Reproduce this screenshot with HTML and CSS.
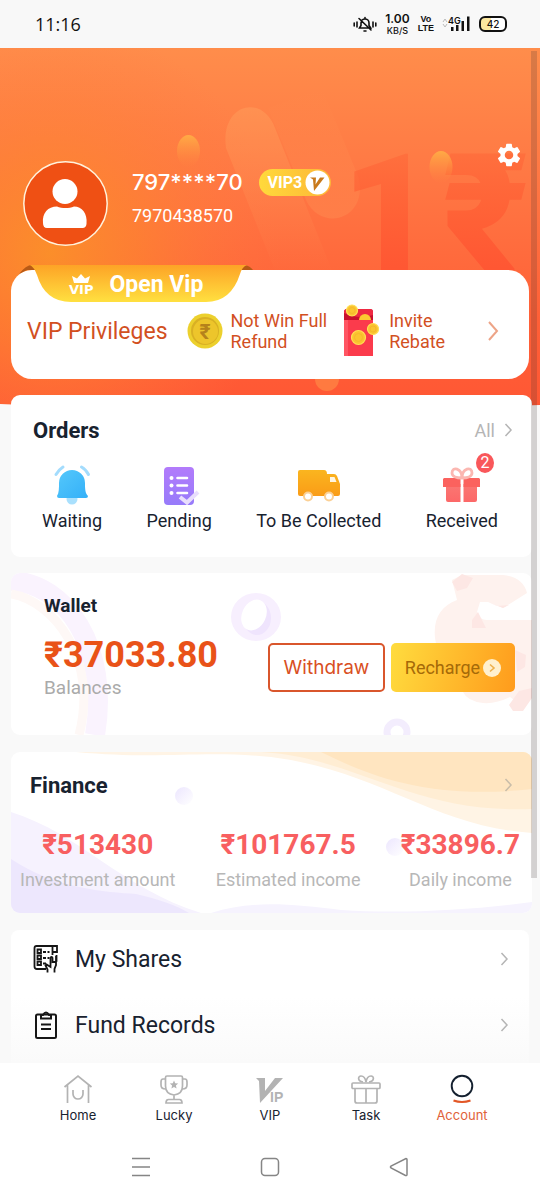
FILE: index.html
```html
<!DOCTYPE html>
<html lang="en">
<head>
<meta charset="utf-8">
<meta name="viewport" content="width=device-width, initial-scale=1">
<title>Account</title>
<link rel="stylesheet" href="styles.css">
</head>
<body>
<div class="app">
  <header class="status">
    <span class="status-time">11:16</span>
    <div class="status-right">
      <svg width="24" height="18" viewBox="0 0 24 18" fill="none" stroke="#111" stroke-width="1.6" stroke-linecap="round"><path d="M1.200 8v3M4 7v5M20 7v5M22.800 8v3"/><path d="M6.500 13h11.200l-1.700-2.500V8a4 4 0 0 0-8 0v2.500L6.500 13zM11 16h2M12 2.500v1M6 3.500l12 11.500"/></svg>
      <span class="speed"><b>1.00</b><span>KB/S</span></span>
      <span class="volte"><span>Vo</span><span>LTE</span></span>
      <svg width="29" height="18" viewBox="0 0 29 18"><path d="M1 7l2-3 2 3M1 9l2 3 2-3" fill="none" stroke="#bbb"/><text x="6" y="9" class="net">4G</text><path d="M9 12h2.500v4H9zM14 10h2.500v6H14zM19.500 6H22v10h-2.500zM25 1.500h2.500V16H25z" fill="#111"/></svg>
      <span class="battery">42</span>
    </div>
  </header>

  <div class="viewport">
  <main class="scroll">
    <svg class="hero-bg" viewBox="0 0 540 362" preserveAspectRatio="xMidYMin slice" aria-hidden="true">
      <defs>
        <linearGradient id="h1" x2="0" y2="1"><stop offset="0" stop-color="#ff8d4b"/><stop offset=".35" stop-color="#ff7844"/><stop offset=".75" stop-color="#ff6037"/><stop offset="1" stop-color="#ff5734"/></linearGradient>
        <radialGradient id="h2" gradientUnits="userSpaceOnUse" cx="50" cy="205" r="230"><stop offset="0" stop-color="#fb9029" stop-opacity=".95"/><stop offset=".4" stop-color="#fd862f" stop-opacity=".65"/><stop offset="1" stop-color="#ff7840" stop-opacity="0"/></radialGradient>
        <linearGradient id="h3" x2="0" y2="1"><stop offset="0" stop-color="#ffab45"/><stop offset="1" stop-color="#ff8a40" stop-opacity="0"/></linearGradient>
        <linearGradient id="h4" gradientUnits="userSpaceOnUse" x1="0" y1="60" x2="0" y2="230"><stop offset="0" stop-color="#ff9a58" stop-opacity=".6"/><stop offset="1" stop-color="#ff8950" stop-opacity="0"/></linearGradient>
        <linearGradient id="h5" gradientUnits="userSpaceOnUse" x1="0" y1="40" x2="0" y2="185"><stop offset="0" stop-color="#ff9050" stop-opacity="0"/><stop offset="1" stop-color="#ff8a50" stop-opacity=".55"/></linearGradient>
        <linearGradient id="h6" gradientUnits="userSpaceOnUse" x1="0" y1="100" x2="0" y2="220"><stop offset="0" stop-color="#ff6335" stop-opacity=".45"/><stop offset=".5" stop-color="#ff5e34" stop-opacity=".75"/><stop offset="1" stop-color="#ff5733"/></linearGradient>
      </defs>
      <path d="M0 0h540v357q-270 9-540-1z" fill="url(#h1)"/>
      <path d="M0 0h540v357q-270 9-540-1z" fill="url(#h2)"/>
      <path d="M226 100C220 56 262 45 275 80l60 150h-57z" fill="url(#h4)"/>
      <path d="M322 40l36 88c12 42-36 58-52 24L268 60z" fill="url(#h5)"/>
      <text x="341" y="222" class="hero-mark" fill="url(#h6)">1</text>
      <text x="442" y="222" class="hero-mark" fill="url(#h6)">₹</text>
      <ellipse cx="188.500" cy="103" rx="11.500" ry="16" fill="url(#h3)"/>
      <ellipse cx="441" cy="119" rx="11.500" ry="16" fill="url(#h3)"/>
      <ellipse cx="327" cy="331" rx="12" ry="12" fill="#ff7a40"/>
    </svg>

    <section class="profile">
      <svg class="avatar" viewBox="0 0 85 85" role="img" aria-label="Profile photo"><circle cx="42.500" cy="42.500" r="41.700" fill="#ef5014" stroke="#fff2dc" stroke-width="1.500"/><circle cx="42" cy="30.500" r="12.500" fill="#fff"/><path d="M20 62C19 52 25 45.500 34 45.500c5 2 12 2 17 0C59 45.500 64.500 52 63.500 63q-.5 4-4 4H24q-4 0-4-5z" fill="#fff"/></svg>
      <div class="who">
        <div class="who-line"><h1 class="who-name">797****70</h1>
          <span class="level">VIP3<svg width="25" height="25" viewBox="0 0 25 25" aria-hidden="true"><circle cx="12.500" cy="12.500" r="12" fill="#fff"/><path d="M5 7.500h6l-.5 7 4.500-7h4.500L9 21 8 9.500z" fill="#c97a1c"/></svg></span>
        </div>
        <p class="who-phone">7970438570</p>
      </div>
      <button class="gear" type="button" aria-label="Settings"><svg width="26" height="26" viewBox="1 1 22 22"><path fill="#fff" d="M19.140 12.940c.04-.3.060-.61.060-.94s-.02-.64-.07-.94l2.030-1.580a.49.490 0 0 0 .12-.61l-1.920-3.320a.49.490 0 0 0-.59-.22l-2.390.96a7 7 0 0 0-1.620-.94l-.36-2.540a.48.480 0 0 0-.48-.41h-3.840a.48.480 0 0 0-.47.410l-.36 2.540a7.400 7.400 0 0 0-1.620.94l-2.390-.96a.49.490 0 0 0-.59.220L2.740 8.870a.48.480 0 0 0 .12.610l2.030 1.580a6 6 0 0 0-.02 1.880l-2.030 1.580a.49.490 0 0 0-.12.610l1.920 3.320c.12.220.37.290.59.220l2.390-.96c.5.380 1.030.7 1.620.94l.36 2.540c.05.240.24.410.48.410h3.840c.24 0 .44-.17.470-.41l.36-2.540a7 7 0 0 0 1.620-.94l2.390.96c.22.080.47 0 .59-.22l1.920-3.320a.49.490 0 0 0-.12-.61zM12 15.600a3.600 3.600 0 1 1 0-7.200 3.600 3.600 0 0 1 0 7.200z"/></svg></button>
    </section>

    <section class="vip">
      <div class="ribbon">
        <svg class="ribbon-bg" viewBox="0 0 234 38" preserveAspectRatio="none" aria-hidden="true"><defs><linearGradient id="r1" x2="0" y2="1"><stop offset="0" stop-color="#fda326"/><stop offset="1" stop-color="#ffe040"/></linearGradient></defs><path d="M0 9Q7 0 13 0l10 5H8zM226 0q5 1 8 5h-14z" fill="#b85a16"/><path d="M11 0h217q-5 2-7 9-9 28-34 28H52Q26 37 18 10 15 2 11 0z" fill="url(#r1)"/></svg>
        <span class="crown"><svg width="20" height="9" viewBox="0 0 20 9" aria-hidden="true"><path d="M1 2l5 2.500L10 0l4 4.500L19 2l-2 7H3z" fill="#fff"/></svg><span>VIP</span></span>
        <span class="ribbon-title">Open Vip</span>
      </div>
      <h2 class="vip-title">VIP Privileges</h2>
      <div class="perk">
        <svg width="36" height="36" viewBox="0 0 36 36" aria-hidden="true"><circle cx="18" cy="18" r="17.500" fill="#ecd02d"/><circle cx="18" cy="18" r="14" fill="#d9b024"/><circle cx="18.500" cy="18.500" r="12.500" fill="#edc52b"/><text x="18" y="26" text-anchor="middle" class="coin-mark">₹</text></svg>
        <span>Not Win Full<br>Refund</span>
      </div>
      <div class="perk invite">
        <svg width="37" height="54" viewBox="0 0 37 54" aria-hidden="true"><path d="M2 8q0-3 3-3h23q3 0 3 3v9H2z" fill="#c8102c"/><path d="M6 5h22q3 0 3 3v3q-14 5-29-2V8q0-3 4-3z" fill="#ef2942"/><path d="M2 16h29v36H2z" fill="#fb3b4c"/><path d="M2 16h4v36H2z" fill="#ff5563"/><path d="M17 16a6 6 0 0 1 12 0z" fill="#fcc931"/><g fill="#fbc42f" stroke="#ffdf54" stroke-width="1.200"><circle cx="10" cy="6.500" r="5.500"/><circle cx="31" cy="25" r="5.500"/><circle cx="16.500" cy="33.500" r="7"/></g><g fill="none" stroke="#f3b52c" stroke-width=".8"><circle cx="10" cy="6.500" r="3"/><circle cx="31" cy="25" r="3"/><circle cx="16.500" cy="33.500" r="4"/></g></svg>
        <span>Invite<br>Rebate</span>
      </div>
      <svg class="vip-go" width="12" height="20" viewBox="0 0 12 20" aria-hidden="true"><path d="M2 1l8 9-8 9" fill="none" stroke="#eda487" stroke-width="2"/></svg>
    </section>

    <section class="card orders">
      <div class="orders-head"><h2>Orders</h2><a class="all" href="#orders">All <svg width="9" height="14" viewBox="0 0 9 14" aria-hidden="true"><path d="M1.500 1L7 7l-5.500 6" fill="none" stroke="#b5b5b5" stroke-width="1.500"/></svg></a></div>
      <div class="order-items">
        <a class="order" href="#waiting"><svg width="44" height="42" viewBox="0 0 44 42" aria-hidden="true"><defs><linearGradient id="b1" x2="1" y2="1"><stop offset="0" stop-color="#55c8fb"/><stop offset="1" stop-color="#34b0f8"/></linearGradient></defs><circle cx="22" cy="35" r="5.500" fill="#a9e0fd"/><path d="M7 32c2-3 2-8 2-13a13 13 0 0 1 26 0c0 5 0 10 3 13q0 2-2 2H9Q7 34 7 32z" fill="url(#b1)"/><path d="M6 10.500q3-5 7-7.500M38.500 10.500Q36 5.500 31.500 3" fill="none" stroke="#a3dcfd" stroke-width="3" stroke-linecap="round"/></svg><span>Waiting</span></a>
        <a class="order" href="#pending"><svg width="44" height="42" viewBox="0 0 44 42" aria-hidden="true"><defs><linearGradient id="p1" x2="0" y2="1"><stop offset="0" stop-color="#b27bfb"/><stop offset="1" stop-color="#977bfa"/></linearGradient></defs><rect x="7" y="3" width="30" height="38" rx="4" fill="url(#p1)"/><g stroke="#fff" stroke-width="2.600" stroke-linecap="round"><path d="M20.500 14H30M20.500 21.500H30M20.500 29H30"/></g><g fill="#fff"><circle cx="14.500" cy="14" r="2"/><circle cx="14.500" cy="21.500" r="2"/><circle cx="14.500" cy="29" r="2"/></g><path d="M23 33l7 5.500L41 28" fill="none" stroke="#e8defc" stroke-width="4"/></svg><span>Pending</span></a>
        <a class="order" href="#collect"><svg width="44" height="42" viewBox="0 0 44 42" aria-hidden="true"><defs><linearGradient id="t1" x2="0" y2="1"><stop offset="0" stop-color="#fab51f"/><stop offset="1" stop-color="#fa9c17"/></linearGradient></defs><path d="M3 6h24q3 0 3 4h7q2 0 3 2l3 8v10q0 2-2 2H3q-2 0-2-2V8q0-2 2-2z" fill="url(#t1)"/><path d="M33 13h4.500l2 5H33z" fill="#fff6e3"/><g fill="#fff" stroke="#fbd095" stroke-width="2"><circle cx="11" cy="32.500" r="4"/><circle cx="32" cy="32.500" r="4"/></g></svg><span>To Be Collected</span></a>
        <a class="order" href="#received"><svg width="44" height="42" viewBox="0 0 44 42" aria-hidden="true"><defs><linearGradient id="g1" x2="0" y2="1"><stop offset="0" stop-color="#fa7773"/><stop offset="1" stop-color="#fc6868"/></linearGradient></defs><path d="M6 20h14.500v18H8q-2 0-2-2zM23.500 20H37v16q0 2-2 2H23.500z" fill="url(#g1)"/><path d="M4 14h16.500v9H3v-8zM23.500 14H39l1 1v8H23.500z" fill="#fb625e"/><path d="M22 14c-6 0-10-2-10-5 0-7 10-5 10 5 0-10 10-12 10-5 0 3-4 5-10 5z" fill="none" stroke="#fbb7b1" stroke-width="2.800"/></svg><span class="count">2</span><span>Received</span></a>
      </div>
    </section>

    <section class="card wallet">
      <svg class="card-bg" viewBox="0 0 521 162" preserveAspectRatio="xMaxYMid slice" aria-hidden="true">
        <path d="M0 8C55 10 99 75 84 162" fill="none" stroke="#faf3fe" stroke-width="20"/><path d="M0 21C42 28 88 85 68 162" fill="none" stroke="#fef8f6" stroke-width="9"/>
        <ellipse cx="245" cy="44" rx="25" ry="24" fill="#f7effe"/><ellipse cx="246" cy="45" rx="14" ry="17" fill="#efe4fd"/><ellipse cx="243" cy="42" rx="12" ry="16" fill="#fff" transform="rotate(25 243 42)"/>
        <circle cx="386" cy="159" r="10" fill="none" stroke="#f3edfd" stroke-width="7"/>
        <path d="M441 7l10-5h41q20 2 24 18l-24 15-15-6h-8l-3 10q2 8 10 8l45 0v78l-15 4-7-5q-14 7-27 6-16-2-20-11l-10-27q-16-10-18-27c-2-20 6-32 22-38z" fill="#fef2ee"/>
        <path d="M441 9l10-8 11 4-6 10-10 3zM467 39l8 16h-14v-8zM477 29l15 6 6-3-12 1zM498 132l10-14 13-3v10l-9 13h-10zM504 77l11 5-1 12-8 5z" fill="#fde7e4"/>
      </svg>
      <div class="balance"><h2>Wallet</h2><strong>₹37033.80</strong><span>Balances</span></div>
      <div class="wallet-actions">
        <button class="withdraw" type="button">Withdraw</button>
        <button class="recharge" type="button">Recharge<svg width="18" height="18" viewBox="0 0 18 18" aria-hidden="true"><circle cx="9" cy="9" r="9" fill="#fff0ce"/><path d="M7 5.500l4 3.500-4 3.500" fill="none" stroke="#eeb14e" stroke-width="1.600"/></svg></button>
      </div>
    </section>

    <section class="card finance">
      <svg class="card-bg" viewBox="0 0 521 161" preserveAspectRatio="none" aria-hidden="true">
        <defs><linearGradient id="f1" x2="1" y2="1"><stop offset="0" stop-color="#ece6fe"/><stop offset="1" stop-color="#fff"/></linearGradient></defs>
        <path d="M65 0C150 8 190-2 260 5c110 14 160 69 261 76V0z" fill="#fff4e5"/><path d="M250 0c95 5 150 62 271 57V0z" fill="#ffedd3"/><path d="M310 0c50 25 110 48 211 37V0z" fill="#ffe5c0"/>
        <path d="M0 60c70 22 110 76 190 101H0z" fill="#f6f2fe"/><path d="M0 107c45 30 95 33 125 35q35 8 53 19H0z" fill="#ede7fd"/><path d="M200 161c40-13 80-9 130-3 60 4 130 0 191-8v11z" fill="#f6f3fe"/>
        <circle cx="173" cy="44" r="9" fill="url(#f1)"/><circle cx="384" cy="95" r="9" fill="url(#f1)"/>
      </svg>
      <div class="finance-head"><h2>Finance</h2><svg width="9" height="14" viewBox="0 0 9 14" aria-hidden="true"><path d="M1.500 1L7 7l-5.500 6" fill="none" stroke="#c9bda9" stroke-width="1.500"/></svg></div>
      <dl class="figures">
        <div><dt>Investment amount</dt><dd>₹513430</dd></div>
        <div><dt>Estimated income</dt><dd>₹101767.5</dd></div>
        <div><dt>Daily income</dt><dd>₹33896.7</dd></div>
      </dl>
    </section>

    <nav class="links" aria-label="Records">
      <a href="#shares"><svg width="26" height="28" viewBox="0 0 26 28" fill="none" stroke="#161616" stroke-width="1.800" aria-hidden="true"><path d="M13 24H4q-2.500 0-2.500-2.500V3q0-2 2-2H24v6h-4.500M19.500 10V2M4.500 4.500H8V8H4.500zM4.500 10.500H8V14H4.500zM4.500 16.500H8V20H4.500zM10 7h3M14.500 7h2M10 13h3M14.500 13h2M10 18.500h3"/><path d="M14.500 27.500v-3l-2-4 1-1 4 2.500v-9q1-2 2 0v4l4-1V10M23 11v9l-1.500 4v3.500"/></svg><span>My Shares</span><svg width="9" height="14" viewBox="0 0 9 14" aria-hidden="true"><path d="M1.500 1L7 7l-5.500 6" fill="none" stroke="#b5b5b5" stroke-width="1.500"/></svg></a>
      <a href="#funds"><svg width="26" height="28" viewBox="0 0 26 28" fill="none" stroke="#161616" stroke-width="2" aria-hidden="true"><rect x="3" y="3.500" width="20" height="23.500" rx="1.500"/><path d="M8 7.500V4h2q3-5 6 0h2v3.500zM8 13.500h10M8 18h10"/></svg><span>Fund Records</span><svg width="9" height="14" viewBox="0 0 9 14" aria-hidden="true"><path d="M1.500 1L7 7l-5.500 6" fill="none" stroke="#b5b5b5" stroke-width="1.500"/></svg></a>
    </nav>
  </main>
  <div class="thumb" aria-hidden="true"></div>
  </div>

  <nav class="tabs" aria-label="Main">
    <a href="#home"><svg width="30" height="30" viewBox="0 0 30 30" fill="none" stroke="#b3b3b3" stroke-width="1.700" aria-hidden="true"><path d="M1.500 13L15 2l13.500 11M4.500 11v18M25.500 11v18M10 16v4a5 5 0 0 0 10 0v-4"/></svg><span>Home</span></a>
    <a href="#lucky"><svg width="30" height="30" viewBox="0 0 30 30" fill="none" stroke="#b3b3b3" stroke-width="1.700" aria-hidden="true"><path d="M8 2h14q1.500 0 1.500 1.500V12q0 8-8.500 9-8.500-1-8.500-9V3.500Q6.500 2 8 2zM6.500 5H4Q2 5 2 8v3q0 4 4.500 4M23.500 5H26q2 0 2 3v3q0 4-4.500 4M15 21v4M9.500 25.500h11q2.500 0 2.500 3.500H7q0-3.500 2.500-3.500z"/><path d="M15 6.500l1.200 2.800 3 .3-2.300 2 .7 3-2.600-1.600-2.600 1.600.7-3-2.300-2 3-.3z" fill="#b3b3b3" stroke="none"/></svg><span>Lucky</span></a>
    <a href="#vip"><svg width="30" height="30" viewBox="0 0 30 30" aria-hidden="true"><path d="M1 4h9v13L20 4h8L5 29 4 7z" fill="#b3b3b3"/><text x="15" y="28" class="ip">IP</text></svg><span>VIP</span></a>
    <a href="#task"><svg width="30" height="30" viewBox="0 0 30 30" fill="none" stroke="#b3b3b3" stroke-width="1.700" aria-hidden="true"><rect x="1" y="9" width="28" height="5.500" rx="1"/><path d="M4 14.500V27q0 2 2 2h18q2 0 2-2V14.500M15 14.500V29M12 8C6 7 7 2 10 2q4 0 5 6 1-6 5-6c3 0 4 5-2 6"/></svg><span>Task</span></a>
    <a class="on" href="#account"><svg width="30" height="30" viewBox="0 0 30 30" fill="none" aria-hidden="true"><circle cx="15" cy="12" r="10.300" stroke="#14202f" stroke-width="1.900"/><path d="M6.500 26.500q8.500 3 17 0" stroke="#e25726" stroke-width="2.200"/></svg><span>Account</span></a>
  </nav>

  <div class="system">
    <button type="button" aria-label="Menu"><svg width="20" height="20" viewBox="0 0 20 20"><path d="M1 1.500h18M1 10h18M1 18.500h18"/></svg></button>
    <button type="button" aria-label="Home screen"><svg width="20" height="20" viewBox="0 0 20 20"><rect x="1.500" y="1.500" width="17" height="17" rx="3.500"/></svg></button>
    <button type="button" aria-label="Back"><svg width="20" height="20" viewBox="0 0 20 20"><path d="M17 1.500q1 0 1 1v15q0 1.500-1.500 1L2 11q-1-1 0-2z"/></svg></button>
  </div>
</div>
</body>
</html>
```

FILE: styles.css
```css
* { box-sizing: border-box; }
body, h1, h2, p, dl, dd { margin: 0; }
body { background: #f9f9f9; color: #18222f; font-family: Roboto, "Liberation Sans", sans-serif; }
a { color: inherit; text-decoration: none; }
button { border: 0; padding: 0; background: none; font: inherit; cursor: pointer; }
svg { display: block; flex: none; }

.app { display: flex; flex-direction: column; height: 100vh; }

.status { display: flex; flex: none; justify-content: space-between; align-items: center; height: 48px; padding: 0 33px 0 35px; background: #f8f8f8; color: #111; }
.status-time { font: 400 18px "Open Sans", sans-serif; }
.status-right { display: flex; align-items: center; gap: 8px; }
.speed, .volte { display: flex; flex-direction: column; align-items: center; font: 500 9px/9px Inter, sans-serif; }
.speed { line-height: 11px; }
.speed b { font-size: 12px; line-height: 12px; font-weight: 600; }
.volte { font: 700 9px/9px "Liberation Sans", sans-serif; }
.net { font: 600 9px Inter, sans-serif; fill: #111; }
.battery { width: 28px; height: 16px; border: 2px solid #111; border-radius: 6px; background: linear-gradient(90deg, #fbe7a0 42%, #fff 42%); font: 500 10px/12px Inter, sans-serif; text-align: center; }

.viewport { position: relative; flex: 1; min-height: 0; }
.scroll { position: relative; height: 100%; overflow-y: auto; scrollbar-width: none; padding: 94px 8px 0 11px; background: #f9f9f9; }
.thumb { position: absolute; top: 3px; right: 3px; bottom: 185px; width: 6px; background: rgba(60, 50, 50, .2); }
.hero-bg { position: absolute; top: 0; left: 0; width: 100%; height: 362px; }
.hero-mark { font: 900 164px Roboto, sans-serif; }

.profile { position: relative; display: flex; align-items: flex-start; height: 128px; padding: 0 10px 0 12px; color: #fff; }
.avatar { width: 85px; height: 85px; margin-top: 19px; }
.who { flex: 1; margin: 25px 0 0 24px; }
.who-line { display: flex; align-items: center; gap: 16px; height: 30px; }
.who-name { font: 500 22px Inter, sans-serif; }
.who-phone { margin-top: 8px; font-size: 18px; line-height: 22px; }
.level { display: flex; align-items: center; gap: 3px; height: 27px; padding: 0 1px 0 9px; border-radius: 14px; background: linear-gradient(90deg, #ffd93b, #fdb637); font-size: 16px; font-weight: 700; }

.vip { position: relative; display: flex; align-items: center; height: 109px; margin-right: 3px; padding: 13px 30px 0 16px; border-radius: 21px; background: #fff; color: #d2501f; }
.ribbon { position: absolute; top: -5px; left: 8px; display: flex; align-items: center; gap: 16px; width: 234px; height: 38px; padding-left: 50px; color: #fff; }
.ribbon-bg { position: absolute; inset: 0; width: 100%; height: 100%; }
.crown { position: relative; display: flex; flex-direction: column; align-items: center; gap: 2px; font: 700 13px/10px "DejaVu Sans", sans-serif; }
.ribbon-title { position: relative; font-size: 23px; font-weight: 700; }
.vip-title { font-size: 23px; font-weight: 400; }
.perk { display: flex; align-items: center; gap: 8px; margin-left: 19px; font-size: 18px; line-height: 21px; white-space: nowrap; }
.invite { gap: 10px; margin-left: 15px; }
.vip-go { margin-left: auto; }
.coin-mark { font: 700 21px Roboto, sans-serif; fill: #b5821b; }

.card { position: relative; overflow: hidden; margin-top: 16px; border-radius: 9px; background: #fff; }
.card-bg { position: absolute; inset: 0; width: 100%; height: 100%; }
.card h2 { position: relative; font-weight: 700; }

.orders { height: 162px; padding: 22px 19px 0 22px; }
.orders-head { display: flex; align-items: center; justify-content: space-between; height: 26px; }
.orders-head h2 { font-size: 22px; }
.all { display: flex; align-items: center; gap: 9px; font-size: 18px; color: #b5b5b5; }
.order-items { display: flex; justify-content: space-between; margin-top: 21px; padding: 0 15px 0 9px; }
.order { position: relative; display: flex; flex-direction: column; align-items: center; gap: 4px; font-size: 18px; line-height: 22px; }
.count { position: absolute; top: -11px; right: 4px; width: 18px; height: 20px; border-radius: 50%; background: #f9575a; color: #fff; font-size: 16px; line-height: 20px; text-align: center; }

.wallet { display: flex; justify-content: space-between; align-items: flex-start; height: 162px; padding: 20px 17px 0 33px; }
.balance { position: relative; display: flex; flex-direction: column; }
.balance h2 { font-size: 19px; line-height: 26px; }
.balance strong { margin-top: 15px; font-size: 36px; font-weight: 700; line-height: 42px; color: #e95218; }
.balance span { font-size: 19px; line-height: 24px; color: #aaa; }
.wallet-actions { position: relative; display: flex; gap: 6px; margin-top: 50px; }
.withdraw { width: 117px; height: 49px; border: 2px solid #d9562c; border-radius: 5px; background: #fff; color: #d9501f; font: 400 19px Inter, sans-serif; }
.recharge { display: flex; align-items: center; justify-content: center; gap: 3px; width: 124px; height: 49px; border-radius: 5px; background: linear-gradient(105deg, #ffdc3e, #ff9b1c); color: #a56a08; font-size: 18px; }

.finance { height: 161px; margin-top: 17px; padding: 20px 12px 0 9px; }
.finance-head { position: relative; display: flex; align-items: center; justify-content: space-between; height: 26px; padding: 0 7px 0 10px; }
.finance-head h2 { font-size: 22px; }
.figures { position: relative; display: flex; justify-content: space-between; margin-top: 29px; }
.figures div { display: flex; flex-direction: column-reverse; align-items: center; gap: 6px; }
.figures dd { font-size: 28px; font-weight: 700; line-height: 36px; color: #f85f60; }
.figures dt { font-size: 18px; line-height: 22px; color: #b7b7b7; }

.links { display: flex; flex-direction: column; gap: 8px; margin: 17px 3px 0 0; padding: 0 20px 9px 22px; border-radius: 8px 8px 0 0; background: linear-gradient(#fff 50%, #fafafa); font-size: 23px; }
.links a { display: flex; align-items: center; gap: 16px; height: 58px; }
.links span { flex: 1; }

.tabs { display: flex; flex: none; height: 70px; padding: 11px 30px 0; background: #fff; }
.tabs a { display: flex; flex: 1; flex-direction: column; align-items: center; gap: 3px; font: 400 13px/16px Inter, sans-serif; }
.tabs .on { color: #df6239; }
.ip { font: 700 14px "Liberation Sans", sans-serif; fill: #b3b3b3; }

.system { display: flex; flex: none; align-items: center; justify-content: center; gap: 109px; height: 67px; background: #fff; }
.system svg { fill: none; stroke: #858585; stroke-width: 1.500; }
```
